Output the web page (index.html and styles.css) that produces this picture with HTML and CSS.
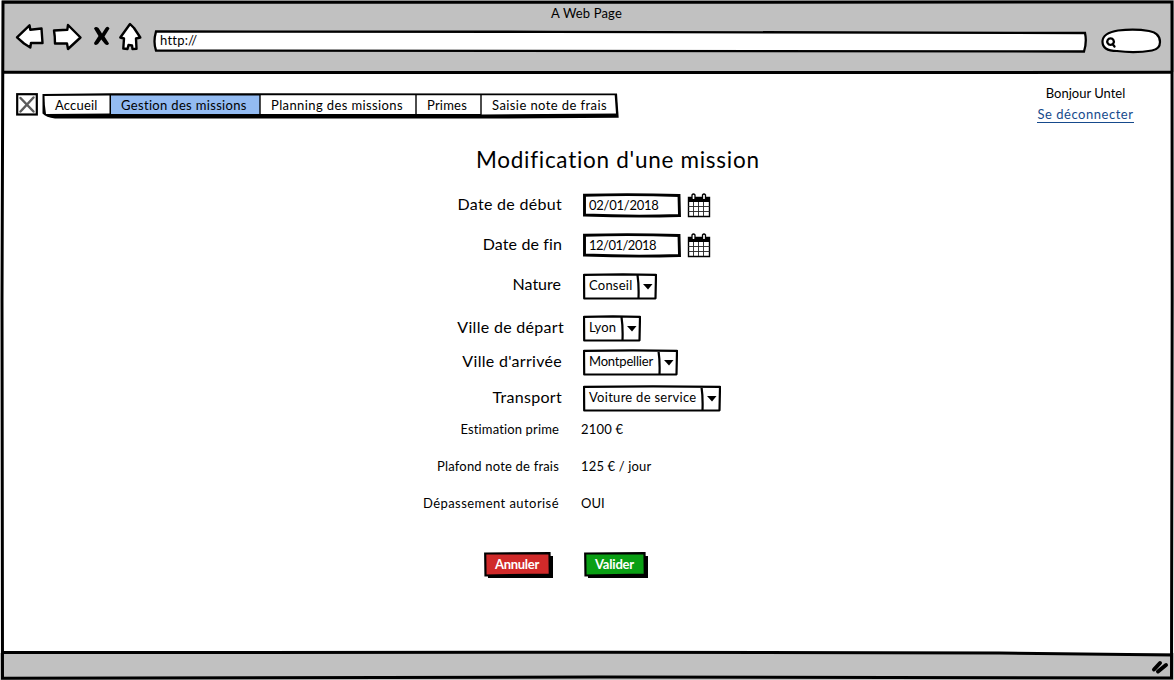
FILE: index.html
```html
<!DOCTYPE html>
<html lang="fr">
<head>
<meta charset="utf-8">
<title>Modification d'une mission</title>
<link rel="stylesheet" href="styles.css">
</head>
<body>
<div class="browser">
  <header class="chrome">
    <div class="page-title">A Web Page</div>
    <div class="toolbar">
      <svg class="nav-icons" width="128" height="32" viewBox="15 21 128 32">
        <g fill="#fff" stroke="#000" stroke-width="2.4" stroke-linejoin="round">
          <path d="M17 37.3 29.5 25.3 30.3 29.8 41.5 28.5 42.5 43 31 43 30.3 47.5 24 43.5Z"/>
          <path d="M54 30.5 67.3 29.8 68 25 80.5 37.5 68 49 67 43.5 55 43.5Q55 36 54 30.5Z"/>
          <path d="M130 24 120.3 37.5 124 38.5 123.3 48.5 127.5 49 128.5 45 132 45.5 132.5 49 136.5 48.8 136 38.5 140.3 37.5 134 28Z"/>
        </g>
        <path d="M94 28.5Q95.500 26 98.500 28L102 33.500 105.500 28Q108 25.500 109.500 28.500L104.500 36.500 109 43.500Q107.500 46.500 104.500 43.500L101.300 39.500 98 44Q94.500 46.500 94 43L98.500 36Z"/>
      </svg>
      <div class="address">
        <svg class="sketch" viewBox="0 0 934 24"><path d="M3 1.500 400 1.800 932 3Q934 12 931 21.500L3 20.500Q0 12 3 1.500Z" fill="#fff" stroke="#000" stroke-width="2.3"/></svg>
        <span class="url">http://</span>
      </div>
      <svg class="search" width="62" height="26" viewBox="1100 28 62 26">
        <path d="M1118 30.5Q1135 28.5 1149 31Q1160 33 1160 42Q1160 49 1152 50.5Q1135 53.500 1117 51Q1102 51 1102.500 41Q1103 33 1118 30.500Z" fill="#fff" stroke="#000" stroke-width="2.2"/>
        <path d="M1110.500 38.300a3.300 3.300 0 1 0 .1 0ZM1112.500 44 1114.500 46.500" fill="none" stroke="#000" stroke-width="2.300" stroke-linecap="round"/>
      </svg>
    </div>
  </header>

  <main class="page">
    <div class="top">
      <svg class="logo" width="22" height="24" viewBox="16 92 22 24">
        <rect x="17.2" y="94.2" width="19.6" height="20.3" fill="#fff" stroke="#000" stroke-width="2.2"/>
        <path d="M20.500 98 33.500 111.500M33.500 97.500 20.500 111.500" stroke="#5c5c5c" stroke-width="2.500" stroke-linecap="round"/>
      </svg>
      <nav class="tabs">
        <svg class="sketch" viewBox="42 92 577 27">
          <path d="M42.500 94 110 93.300 617 93.500 618.700 117.800 500 118.500 55 118.500Q46 117.500 42.500 113.500Z" fill="#000"/>
          <path d="M44.500 96 109.500 95.500V113.500L46 114Q44.500 105 44.500 96Z" fill="#fff"/>
          <path d="M111 95.500H259.300V114H111Z" fill="#93bbf2"/>
          <path d="M260.700 95.300H415.300V114H260.700ZM416.700 95.300H480.300V114H416.700ZM481.700 95.300H614.700L616 113.500 481.700 114.500Z" fill="#fff"/>
        </svg>
        <a class="tab tab-home">Accueil</a>
        <a class="tab tab-missions">Gestion des missions</a>
        <a class="tab tab-planning">Planning des missions</a>
        <a class="tab tab-primes">Primes</a>
        <a class="tab tab-frais">Saisie note de frais</a>
      </nav>
      <div class="user">
        <span class="hello">Bonjour Untel</span>
        <a class="logout">Se déconnecter</a>
      </div>
    </div>

    <h1 class="heading">Modification d'une mission</h1>

    <form class="form">
      <label class="label">Date de début</label>
      <div class="field">
        <div class="input">
          <svg class="sketch" viewBox="0 0 98 25"><path d="M1.500 2.200Q50 1 96 2.500L96.500 22.500Q50 24 1.500 22Z" fill="#fff" stroke="#000" stroke-width="2.900"/></svg>
          <span class="date-start">02/01/2018</span>
        </div>
        <svg class="calendar" width="24" height="25" viewBox="0 0 24 25">
          <path d="M1.500 4.500H22.500V23.500H1.500Z" fill="#fff" stroke="#000" stroke-width="1.400"/>
          <path d="M1 4H23V9H1Z"/>
          <path d="M6.500 9V23M11.500 9V23M16.500 9V23M1 13.500H23M1 18.500H23" stroke="#222" stroke-width=".9"/>
          <path d="M5 2q1.500-2 3 0v4q-1.500 1.500-3 0zM15.500 2q1.500-2 3 0v4q-1.500 1.500-3 0z" fill="#fff" stroke="#000" stroke-width="1.300"/>
        </svg>
      </div>

      <label class="label fin">Date de fin</label>
      <div class="field">
        <div class="input">
          <svg class="sketch" viewBox="0 0 98 25"><path d="M1.500 2.200Q50 1 96 2.500L96.500 22.500Q50 24 1.500 22Z" fill="#fff" stroke="#000" stroke-width="2.900"/></svg>
          <span class="date-end">12/01/2018</span>
        </div>
        <svg class="calendar" width="24" height="25" viewBox="0 0 24 25">
          <path d="M1.500 4.500H22.500V23.500H1.500Z" fill="#fff" stroke="#000" stroke-width="1.400"/>
          <path d="M1 4H23V9H1Z"/>
          <path d="M6.500 9V23M11.500 9V23M16.500 9V23M1 13.500H23M1 18.500H23" stroke="#222" stroke-width=".9"/>
          <path d="M5 2q1.500-2 3 0v4q-1.500 1.500-3 0zM15.500 2q1.500-2 3 0v4q-1.500 1.500-3 0z" fill="#fff" stroke="#000" stroke-width="1.300"/>
        </svg>
      </div>

      <label class="label nature">Nature</label>
      <div class="field"><div class="select select-nature">
        <svg class="sketch" viewBox="0 0 74 27"><path d="M1 1.800 40 1.300 73 1.800 72.500 25.300 1.200 25.500ZM54.500 2Q56 12 55.500 25" fill="#fff" stroke="#000" stroke-width="2.200" stroke-linejoin="round"/><path d="M60 11H69.500L65 16.500Z"/></svg>
        <span>Conseil</span></div></div>

      <label class="label depart">Ville de départ</label>
      <div class="field"><div class="select select-depart">
        <svg class="sketch" viewBox="0 0 58 27"><path d="M1 1.800 30 1.300 57 1.800 56.500 25.300 1.200 25.500ZM38.500 2Q40 12 39.500 25" fill="#fff" stroke="#000" stroke-width="2.200" stroke-linejoin="round"/><path d="M44 11H53.500L49 16.500Z"/></svg>
        <span>Lyon</span></div></div>

      <label class="label">Ville d'arrivée</label>
      <div class="field"><div class="select select-arrivee">
        <svg class="sketch" viewBox="0 0 95 27"><path d="M1 1.800 50 1.300 94 1.800 93.500 25.300 1.200 25.500ZM75.500 2Q77 12 76.500 25" fill="#fff" stroke="#000" stroke-width="2.200" stroke-linejoin="round"/><path d="M81 11H90.500L86 16.500Z"/></svg>
        <span>Montpellier</span></div></div>

      <label class="label">Transport</label>
      <div class="field"><div class="select select-transport">
        <svg class="sketch" viewBox="0 0 138 27"><path d="M1 1.800 70 1.300 137 1.800 136.500 25.300 1.200 25.500ZM118.500 2Q120 12 119.500 25" fill="#fff" stroke="#000" stroke-width="2.200" stroke-linejoin="round"/><path d="M124 11H133.500L129 16.500Z"/></svg>
        <span>Voiture de service</span></div></div>

      <span class="info info-prime">Estimation prime</span><span class="value value-prime">2100 €</span>
      <span class="info info-plafond">Plafond note de frais</span><span class="value value-plafond">125 € / jour</span>
      <span class="info info-depassement">Dépassement autorisé</span><span class="value value-oui">OUI</span>
    </form>

    <div class="actions">
      <button class="button cancel">
        <svg class="sketch" viewBox="0 0 70 27"><path d="M4 5 69 4V26H4Z"/><path d="M1.200 1.500 65.500 1.200 65.800 22.500 1.500 23.500Z" fill="#d02a2a" stroke="#000" stroke-width="2.200"/></svg>
        <span>Annuler</span></button>
      <button class="button submit">
        <svg class="sketch" viewBox="0 0 65 27"><path d="M4 5 64 4V26H4Z"/><path d="M1.200 1.500 60.500 1.200 60.800 22.500 1.500 23.500Z" fill="#0a9f14" stroke="#000" stroke-width="2.200"/></svg>
        <span>Valider</span></button>
    </div>
  </main>

  <footer class="status"></footer>

  <svg class="frame" width="1174" height="680" viewBox="0 0 1174 680" fill="none" stroke="#000" stroke-width="3">
    <path d="M3 2 600 2.300 1172 2 1172.200 300 1171.500 678 600 677 2.500 678.300 2 300Z"/>
    <path d="M2 72.300 600 72.600 1172 72.300M2 652.500 600 652.300 1000 653 1172 655"/>
    <path d="M1154 669.500 1160 663M1158 671.500 1166 665" stroke-width="4" stroke-linecap="round"/>
  </svg>
</div>
</body>
</html>
```
FILE: styles.css
```css
* { box-sizing: border-box; }

body {
  margin: 0;
  font: 13px/16px "Lato", sans-serif;
  color: #000;
  background: #fff;
}

.browser {
  position: relative;
  width: 1174px;
  height: 680px;
  display: flex;
  flex-direction: column;
  overflow: hidden;
}

/* hand-drawn outlines lie over or under the flowed content */
.frame { position: absolute; inset: 0; pointer-events: none; }
.sketch { position: absolute; inset: 0; width: 100%; height: 100%; z-index: -1; }

.chrome {
  height: 72px;
  background: #c1c1c1;
  border-left: 2px solid #fff;
  padding-top: 5px;
}
.page-title {
  padding-right: 3px;
  text-align: center;
  letter-spacing: .15px;
}
.toolbar {
  display: flex;
  align-items: flex-start;
  padding-left: 13px;
}
.address {
  position: relative;
  z-index: 0;
  width: 934px;
  height: 24px;
  margin: 9px 0 0 10px;
  padding: 2px 7px;
}
.url { letter-spacing: .22px; }
.search { margin: 7px 0 0 13px; }

.page { flex: 1; }
.top { display: flex; padding: 20px 0 0 16px; }
.tabs {
  position: relative;
  z-index: 0;
  display: flex;
  width: 577px;
  height: 27px;
  margin-left: 4px;
}
.tab { padding: 5px 0 0 11px; line-height: 16px; white-space: nowrap; }
.tab-home { width: 68px; padding-left: 13px; letter-spacing: .18px; }
.tab-missions { width: 150px; letter-spacing: .33px; }
.tab-planning { width: 156px; letter-spacing: .39px; }
.tab-primes { width: 65px; letter-spacing: .21px; }
.tab-frais { width: 138px; letter-spacing: .42px; }

.user {
  display: flex;
  flex-direction: column;
  align-items: center;
  gap: 5px;
  width: 97px;
  height: 38px;
  margin: -7px 0 0 418px;
}
.logout {
  color: #164a8c;
  letter-spacing: .53px;
  border-bottom: 1px solid #164a8c;
  line-height: 16px;
}

.heading {
  margin: 22px 0 1px 476px;
  font-size: 22.5px;
  line-height: 30px;
  font-weight: 400;
  letter-spacing: .72px;
}

.form {
  display: grid;
  grid-template-columns: 562px 1fr;
  grid-template-rows: 40px 40px 42px 42px 26px 46px 16px 58px 16px;
  align-items: center;
  column-gap: 19px;
  padding-top: 9px;
}
.label {
  justify-self: end;
  font-size: 16px;
  line-height: 20px;
  padding-bottom: 2px;
  letter-spacing: .3px;
}
.label.fin { letter-spacing: .12px; }
.label.nature { letter-spacing: 0; padding-bottom: 4px; margin-right: 1px; }
.label.depart { margin-right: -2px; }
.field { display: flex; gap: 6px; padding-left: 2px; }
.input { position: relative; z-index: 0; width: 98px; height: 25px; padding: 4px 6px; }
.date-start { letter-spacing: -.25px; }
.date-end { letter-spacing: -.51px; }
.select { position: relative; z-index: 0; height: 27px; padding: 4px 6px; }
.select-nature { width: 74px; letter-spacing: .23px; }
.select-depart { width: 58px; letter-spacing: .1px; }
.select-arrivee { width: 95px; letter-spacing: -.19px; }
.select-transport { width: 138px; letter-spacing: .28px; }
.info { justify-self: end; margin-right: 3px; }
.info-prime { letter-spacing: .14px; }
.info-plafond { letter-spacing: .19px; }
.info-depassement { letter-spacing: .44px; }
.value-prime { letter-spacing: .2px; }
.value-plafond { letter-spacing: .15px; }
.value-oui { letter-spacing: 0; }

.actions { display: flex; gap: 30px; margin: 41px 0 0 484px; }
.button {
  position: relative;
  z-index: 0;
  height: 27px;
  padding: 0 0 4px 11px;
  border: 0;
  background: none;
  font: bold 13px/16px "Lato", sans-serif;
  text-align: left;
  color: #fff;
}
.cancel { width: 70px; letter-spacing: -.29px; }
.submit { width: 65px; letter-spacing: -.19px; }

.status { height: 27px; background: #c1c1c1; }
```
